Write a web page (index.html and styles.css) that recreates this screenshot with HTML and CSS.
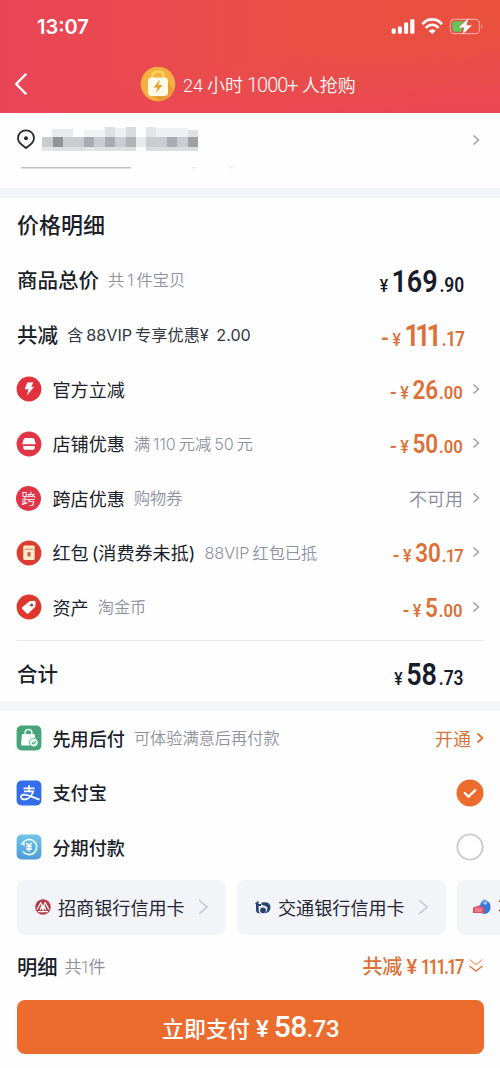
FILE: index.html
```html
<!DOCTYPE html>
<html lang="zh-CN">
<head>
<meta charset="utf-8">
<meta name="viewport" content="width=device-width, initial-scale=1">
<title>价格明细</title>
<link rel="stylesheet" href="styles.css">
</head>
<body>
<header class="header">
  <div class="status">
    <span class="clock">13:07</span>
    <svg class="status-icons" width="92" height="18" viewBox="0 0 92 18">
      <g fill="#fff"><rect x="0.7" y="10.6" width="4" height="5.2" rx="1"/><rect x="6.9" y="8.4" width="4" height="7.4" rx="1"/><rect x="13.1" y="4.6" width="4" height="11.2" rx="1"/><rect x="19.2" y="1.2" width="4.2" height="14.6" rx="1"/></g>
      <g fill="none" stroke="#fff" stroke-width="2.6"><path d="M31.4 6.2C36.8-.2 45.6-.2 51 6.2"/><path d="M34.8 10C38.2 5.6 44.2 5.6 47.6 10"/></g>
      <path d="M37.6 12.7q3.6-3 7.2 0L41.2 16z" fill="#fff"/>
      <rect x="59.4" y="1.3" width="29" height="14.3" rx="4" fill="none" stroke="#fff" stroke-opacity=".48" stroke-width="1.2"/>
      <path d="M90.2 6.2q2.3 2.3 0 4.8z" fill="#fff" fill-opacity=".5"/>
      <path d="M64 3.3h9l-5 5.8 3.5 1-1.5 3.7H64q-2.5 0-2.5-2.5V5.8q0-2.5 2.5-2.5z" fill="#62c55e"/>
      <path d="M77.5.2 67.6 9.6h5.6l-1.7 7 9.5-9.3h-5.6z" fill="#fff"/>
    </svg>
  </div>
  <div class="nav">
    <svg class="back" width="14" height="22" viewBox="0 0 14 22"><path d="M11.5 1.5 2.2 11l9.3 9.5" fill="none" stroke="#fff" stroke-width="2.5" stroke-linecap="round" stroke-linejoin="round"/></svg>
    <svg class="deal" width="36" height="36" viewBox="0 0 36 36">
      <circle cx="18" cy="18" r="17.3" fill="#f6af43"/><path d="m26 13 7.5 11q-4 9-13 11l-9-6z" fill="#dc9430" opacity=".65"/>
      <path d="M12.5 13V9.8q0-4.2 5.5-4.2t5.5 4.2V13" fill="none" stroke="#f9d95d" stroke-width="2.2"/>
      <rect x="8" y="11.5" width="20" height="18.5" rx="3.5" fill="#fffbe6"/><path d="m20 13.5-6.5 8h4l-1.4 5.5 6.4-8h-4z" fill="#dca52b"/>
    </svg>
    <span class="promo">24<i class="gap"></i>小时<i class="gap"></i><b>1000+</b><i class="gap"></i>人抢购</span>
  </div>
</header>

<section class="address">
  <div class="address-row">
    <svg width="20" height="22" viewBox="0 0 20 22"><path d="M10 1.4c-4.6 0-8 3.3-8 7.6 0 3.1 1.9 5.3 4.1 7L10 19l3.9-3c2.2-1.7 4.1-3.9 4.1-7 0-4.300-3.400-7.600-8-7.600z" fill="none" stroke="#292a30" stroke-width="1.8"/><circle cx="10" cy="9.300" r="2" fill="#292a30"/></svg>
    <svg class="mosaic" width="165" height="26" viewBox="0 0 165 26" shape-rendering="crispEdges">
      <path d="M10 2h21v8H10z" fill="#e8ebed"/><path d="M42 3h21v7H42z" fill="#f0f1f3"/><path d="M63 0h10v10H63z" fill="#dddfe2"/><path d="M73 1h11v9H73z" fill="#edeff0"/><path d="M84 0h10v10H84z" fill="#d9dcdf"/><path d="M104 0h10v10h-10z" fill="#e3e5e8"/><path d="M114 1h32v9h-32z" fill="#eff0f3"/><path d="M146 3h10v7h-10z" fill="#dfe1e3"/>
      <path d="M0 10h156v10H0z" fill="#cbccd0"/><path d="M11 10h10v10H11z" fill="#929397"/><path d="M42 10h10v10H42zM63 10h10v10H63zM125 10h10v10h-10z" fill="#a9abb0"/><path d="M84 10h10v10H84z" fill="#b0b4b8"/><path d="M94 10h10v10H94z" fill="#e9eaec"/><path d="M146 10h10v10h-10z" fill="#a0a1a6"/>
      <path d="M0 20h11v4H0zM42 20h10v4H42z" fill="#e4e5e8"/><path d="M11 20h31v4H11zM52 20h42v4H52z" fill="#dddfe2"/><path d="M104 20h52v4h-52z" fill="#dadde0"/>
    </svg>
    <svg class="chev" viewBox="0 0 8 12"><path d="m1.500 1.500 5 4.500-5 4.500"/></svg>
  </div>
  <svg class="address-rest" width="216" height="2" viewBox="0 0 216 2"><path d="M1 .8h110" stroke="#bfc0c4" stroke-width="1.400"/><path d="M172 .8h4M210 .8h3" stroke="#ddd" stroke-width="1"/></svg>
</section>

<section class="prices">
  <h1>价格明细</h1>
  <div class="row"><span class="title">商品总价</span><span class="note">共<i class="thin"></i>1<i class="thin"></i>件宝贝</span><span class="amount big dark"><span class="yen">¥</span><span class="int">169</span><span class="dec">.90</span></span></div>
  <div class="row"><span class="title">共减</span><span class="note vip">含<i class="thin"></i>88VIP<i class="thin"></i>专享优惠¥ <i class="thin"></i>2.00</span><span class="amount big"><span class="minus">-</span><span class="yen">¥</span><span class="int ones">111</span><span class="dec seventeen">.17</span></span></div>
  <div class="row item">
    <svg class="disc" viewBox="0 0 26 26"><circle cx="13" cy="13" r="12.400" fill="#e3303d"/><path d="m11.300 6.500 6-.2-2 4.500h2.800L11 19.500l1.500-6.200H8.600z" fill="#fff"/></svg>
    <span class="label">官方立减</span><span class="amount"><span class="minus">-</span><span class="yen">¥</span><span class="int">26</span><span class="dec">.00</span></span><svg class="chev" viewBox="0 0 8 12"><path d="m1.500 1.500 5 4.500-5 4.500"/></svg>
  </div>
  <div class="row item">
    <svg class="disc" viewBox="0 0 26 26"><circle cx="13" cy="13" r="12.400" fill="#e33445"/><path d="M9.200 7h7.600q1.300 0 1.900 2.200l1 3.600q-1.200 1.300-2.300 0-1.200 1.300-2.200 0-1.200 1.300-2.200 0-1.200 1.300-2.200 0-1.200 1.300-2.200 0-1.200 1.300-2.300 0l1-3.600Q8 7 9.200 7zM7.300 15h11.400v2q0 1.700-1.700 1.700H9q-1.700 0-1.700-1.700z" fill="#fff"/></svg>
    <span class="label">店铺优惠</span><span class="note">满<i class="thin"></i>110<i class="thin"></i>元减<i class="thin"></i>50<i class="thin"></i>元</span><span class="amount"><span class="minus">-</span><span class="yen">¥</span><span class="int">50</span><span class="dec">.00</span></span><svg class="chev" viewBox="0 0 8 12"><path d="m1.500 1.500 5 4.500-5 4.500"/></svg>
  </div>
  <div class="row item">
    <span class="disc kua">跨</span>
    <span class="label">跨店优惠</span><span class="note">购物券</span><span class="unavailable">不可用</span><svg class="chev" viewBox="0 0 8 12"><path d="m1.500 1.500 5 4.500-5 4.500"/></svg>
  </div>
  <div class="row item">
    <svg class="disc" viewBox="0 0 26 26"><circle cx="13" cy="13" r="12.400" fill="#db3b30"/><rect x="7.300" y="5.500" width="11.400" height="14.500" rx="1.300" fill="#ffe9c7"/><path d="M8.500 9.200h9" stroke="#c58763" stroke-width="1"/><rect x="11.400" y="12" width="3.200" height="4.500" rx="1" fill="#b86a4c"/></svg>
    <span class="label">红包<i class="thin"></i>(消费券未抵)</span><span class="note">88VIP<i class="thin"></i>红包已抵</span><span class="amount"><span class="minus">-</span><span class="yen">¥</span><span class="int">30</span><span class="dec seventeen">.17</span></span><svg class="chev" viewBox="0 0 8 12"><path d="m1.500 1.500 5 4.500-5 4.500"/></svg>
  </div>
  <div class="row item">
    <svg class="disc" viewBox="0 0 26 26"><circle cx="13" cy="13" r="12.400" fill="#df372c"/><path d="m13.500 7.200 4.500-.5q1.800 0 1.700 1.900l-.5 4.200-6.700 6.700q-.8.800-1.700 0L6.200 15q-.9-.9 0-1.700z" fill="#fff"/><circle cx="15.600" cy="11" r="1.500" fill="#b93027"/></svg>
    <span class="label">资产</span><span class="note">淘金币</span><span class="amount"><span class="minus">-</span><span class="yen">¥</span><span class="int">5</span><span class="dec">.00</span></span><svg class="chev" viewBox="0 0 8 12"><path d="m1.500 1.500 5 4.500-5 4.500"/></svg>
  </div>
  <div class="row total"><span class="title">合计</span><span class="amount big dark"><span class="yen">¥</span><span class="int">58</span><span class="dec">.73</span></span></div>
</section>

<section class="payments">
  <div class="row item">
    <svg class="disc" viewBox="0 0 26 26"><rect x=".6" y=".6" width="24.800" height="24.800" rx="5" fill="#49a47c"/><path d="M9.200 10V7.500q0-3 3.300-3t3.300 3V10" fill="none" stroke="#d9fff0" stroke-width="1.600"/><path d="M7 9h11.500l1 5-5.500 6.500H6.500q-1.500 0-1.400-1.500l.7-8.500Q5.900 9 7 9z" fill="#fff"/><circle cx="17.800" cy="17.500" r="4.400" fill="#e8fff5" stroke="#49a47c" stroke-width=".8"/><path d="m15.900 17.500 1.500 1.500 2.500-2.600" fill="none" stroke="#49a47c" stroke-width="1.200"/></svg>
    <span class="label bold">先用后付</span><span class="note">可体验满意后再付款</span><span class="open">开通</span><svg class="chev orange" viewBox="0 0 8 12"><path d="m1.500 1.500 5 4.500-5 4.500"/></svg>
  </div>
  <div class="row item">
    <svg class="disc" viewBox="0 0 26 26"><rect x=".6" y=".6" width="24.800" height="24.800" rx="5" fill="#326ee9"/><g fill="none" stroke="#fff" stroke-width="1.700"><path d="M7.500 8.300h11M13 5.300v6M8 11.300h9.300c-1.300 4.300-4.600 8.100-8.600 8.100-4.700 0-4.900-4.700-.8-4.700 4.800 0 8.500 2.600 15.600 4.900"/></g></svg>
    <span class="label bold">支付宝</span>
    <svg class="radio" viewBox="0 0 28 28"><circle cx="14" cy="14" r="13.500" fill="#ec6b2d"/><path d="m8.800 14 3.700 3.700 6.800-6.600" fill="none" stroke="#fff" stroke-width="2.300" stroke-linecap="round" stroke-linejoin="round"/></svg>
  </div>
  <div class="row item">
    <svg class="disc" viewBox="0 0 26 26"><defs><linearGradient id="sky" x2="0" y2="1"><stop stop-color="#70c5e9"/><stop offset="1" stop-color="#4f9adb"/></linearGradient></defs><rect x=".6" y=".6" width="24.800" height="24.800" rx="5" fill="url(#sky)"/><path d="M6.200 9.800A7.600 7.600 0 1 1 7 17.600" fill="none" stroke="#e6fbff" stroke-width="1.700"/><path d="m4.400 10.200 4.800 1.300-1.200-4z" fill="#fff"/><path d="m10.500 9 2.500 3 2.500-3M13 12v5.500M10 12.500h6M10 15h6" fill="none" stroke="#fff" stroke-width="1.400"/></svg>
    <span class="label bold">分期付款</span>
    <svg class="radio" viewBox="0 0 28 28"><circle cx="14" cy="14" r="12.600" fill="#fff" stroke="#c9cbd2" stroke-width="1.900"/></svg>
  </div>
  <div class="chips">
    <div class="chip">
      <svg width="16" height="16" viewBox="0 0 16 16"><circle cx="8" cy="8" r="7.800" fill="#b63b49"/><path d="M2 10.500 5.800 3.800 8 8l2.200-4.200 3.800 6.700M5.200 11 6.500 7.500 8 11l1.500-3.500 1.300 3.500M3 12.700h10" fill="none" stroke="#fff" stroke-width="1.200"/></svg>
      <span>招商银行信用卡</span><svg class="chip-chev" viewBox="0 0 10 16"><path d="m1 1 8 7-8 7"/></svg>
    </div>
    <div class="chip">
      <svg width="16" height="16" viewBox="0 0 16 16"><path d="M0 4.500 3.500 1.500V5H6v2H3.700v4.500q0 2 1.500 3Q1 14.500 1 11V5.500zM6.500 3.500Q16 2 15.500 9q-.5 4.500-6 5.500 3-2 3-5T6.500 6z" fill="#26446e"/><circle cx="8" cy="11.300" r="2.900" fill="#26446e"/></svg>
      <span>交通银行信用卡</span><svg class="chip-chev" viewBox="0 0 10 16"><path d="m1 1 8 7-8 7"/></svg>
    </div>
    <div class="chip partial">
      <svg width="18" height="16" viewBox="0 0 18 16"><path d="M7 7Q8 .5 12.500 2q5 0 5 6 0 6.500-6.500 7L6 13z" fill="#3976d8"/><circle cx="11.500" cy="3" r="2.500" fill="#5aa1ed"/><circle cx="12.500" cy="4.500" r="1.100" fill="#fff"/><path d="M0 8.500 5 7l2-1 1 2h3v6H0z" fill="#e34f60"/><path d="M2 10h7M2 12h7" stroke="#f8c3c8" stroke-width=".8"/></svg>
      <span>不</span>
    </div>
  </div>
</section>

<footer class="footer">
  <div class="summary"><span class="detail">明细</span><span class="count">共1件</span><span class="saved">共减<span class="saved-yen">¥</span><span class="saved-value">111.17</span></span><svg width="16" height="17" viewBox="0 0 16 17"><g fill="none" stroke="#df7742" stroke-width="1.500"><path opacity=".6" d="m1.500 2.500 6.500 5 6.500-5"/><path d="m1.500 9 6.500 5 6.500-5"/></g></svg></div>
  <button class="pay"><span>立即支付</span><span class="pay-yen">¥</span><span class="pay-int">58</span><span class="pay-dec">.73</span></button>
</footer>
</body>
</html>
```

FILE: styles.css
```css
* { box-sizing: border-box; }
body { margin: 0; width: 500px; height: 1068px; overflow: hidden; background: #fefefe; color: #1c1e2b; font-family: Inter, "Noto Sans CJK SC", sans-serif; font-size: 18px; }
svg { display: block; flex: none; }
i { font-style: normal; }
.header { height: 113px; color: #fff; background: linear-gradient(172deg, transparent 50%, rgba(233,69,91,.75) 96%), linear-gradient(90deg, #e94558, #ea4d48 48%, #e9513d); }
.status { height: 54px; padding: 0 18px 0 37px; display: flex; align-items: center; justify-content: space-between; }
.clock { font-size: 20px; font-weight: 600; }
.status-icons { margin-right: -1px; }
.nav { height: 60px; display: flex; align-items: center; padding-left: 14px; }
.back { margin-right: 112px; }
.deal { margin-right: 7px; }
.promo { display: flex; align-items: baseline; font-family: Roboto, "Noto Sans CJK SC", sans-serif; font-size: 18px; font-weight: 350; white-space: nowrap; }
.promo b { font-size: 20px; font-weight: 350; letter-spacing: -1px; }
.gap { width: 4px; }
.thin { display: inline-block; width: 3px; }
.address { height: 85px; border-bottom: 10px solid #f3f4f8; }
.address-row { height: 54px; display: flex; align-items: center; padding: 0 20px 0 16px; }
.mosaic { margin: 0 0 1px 6px; }
.chev { width: 8px; height: 12px; margin-left: 9px; fill: none; stroke: #999ba5; stroke-width: 1.400; }
.address-row .chev { margin-left: auto; }
.address-rest { margin-left: 20px; }
.prices { height: 513px; padding: 0 16px 0 17px; border-bottom: 10px solid #f3f5f9; }
h1 { margin: 0; height: 55px; line-height: 55px; font-size: 22px; font-weight: 500; }
.row { height: 54.500px; display: flex; align-items: center; white-space: nowrap; }
.title { font-size: 20.500px; font-weight: 500; padding-bottom: 2px; }
.note { margin-left: 9px; padding-bottom: 2px; color: #8f919e; font-size: 16.200px; font-weight: 350; }
.note.vip { color: #343644; font-size: 16.200px; font-weight: 400; }
.label { margin-left: 10.500px; padding-bottom: 1px; font-size: 18.100px; font-weight: 400; }
.label.bold { font-weight: 500; }
.disc { width: 26px; height: 26px; flex: none; }
.kua { display: flex; align-items: center; justify-content: center; width: 25px; height: 25px; border-radius: 50%; background: #e23447; color: #fff; font-size: 14.500px; font-weight: 350; margin-right: 1px; padding-bottom: 2px; }
/* Condensed figures */
.amount { display: flex; align-items: baseline; margin-left: auto; padding-top: 5px; color: #dd7037; font-family: Roboto, sans-serif; font-weight: 600; line-height: 28px; transform: scaleX(.9); transform-origin: right; }
.amount.big { margin-right: 20px; padding-top: 7px; transform: scaleX(.87); }
.row.item { margin-left: -1px; padding-right: 4px; }
.row.item .chev { margin-bottom: 1px; }
.amount.dark { color: #181b2a; }
.minus { font-size: 20px; margin-right: 4px; }
.yen { font-size: 18px; font-weight: 500; margin-right: 4px; }
.int { font-size: 25px; margin-right: 1px; }
.big .int { font-size: 31px; margin-right: 2px; }
.dec { font-size: 18.500px; }
.big .dec { font-size: 20px; }
.big .minus { font-size: 24px; }
.big .ones { font-size: 31px; letter-spacing: -5px; margin-right: 5px; }
.dec.seventeen, .big .dec.seventeen { letter-spacing: -1px; }
.unavailable { margin-left: auto; padding-bottom: 1px; color: #898b98; font-weight: 350; }
.total { height: 62px; margin-top: 5px; padding-top: 5px; border-top: 1px solid #e8e9ec; }
.open { margin-left: auto; padding-bottom: 1px; color: #d97439; }
.row.item .chev.orange { margin-left: 5px; margin-right: -5px; stroke: #d97439; stroke-width: 1.800; }
.radio { width: 28px; height: 28px; margin: 0 -5px 0 auto; }
.payments { height: 223px; padding: 0 17px; }
.chips { display: flex; gap: 11px; margin-top: 5px; overflow: hidden; margin-right: -17px; }
.chip { width: 209px; height: 55px; flex: none; border-radius: 8px; background: #f3f4f8; display: flex; align-items: center; padding: 0 18px; gap: 7px; white-space: nowrap; color: #252736; font-size: 18.100px; }
.chip.partial { padding-left: 16px; }
.chip-chev { width: 10px; height: 16px; margin-left: auto; fill: none; stroke: #c5c7ce; stroke-width: 1.600; }
.footer { padding: 0 16px 0 17px; }
.summary { height: 66px; padding-bottom: 3px; display: flex; align-items: center; }
.detail { font-size: 20.300px; font-weight: 500; }
.count { margin-left: 7px; color: #8d8f9b; font-family: Roboto, "Noto Sans CJK SC", sans-serif; font-size: 17px; font-weight: 350; letter-spacing: -1.200px; }
.saved { display: flex; align-items: baseline; margin-left: auto; margin-right: 5px; color: #dc7138; font-size: 20px; font-weight: 500; }
.saved-yen, .saved-value { font-family: Roboto, sans-serif; margin-left: 4px; }
.saved-value { width: 42px; letter-spacing: -2px; font-weight: 600; transform: scaleX(.82); transform-origin: left; }
.pay { width: 100%; height: 54px; border: 0; border-radius: 8px; padding: 0; background: #ec6c2d; color: #fff; display: flex; align-items: baseline; justify-content: center; line-height: 54px; font-family: Roboto, "Noto Sans CJK SC", sans-serif; font-size: 22px; font-weight: 500; }
.pay-yen { margin: 0 5px 0 6px; font-size: 24px; }
.pay-int { font-size: 30px; letter-spacing: -.6px; }
.pay-dec { font-size: 24px; letter-spacing: -.5px; }
```
